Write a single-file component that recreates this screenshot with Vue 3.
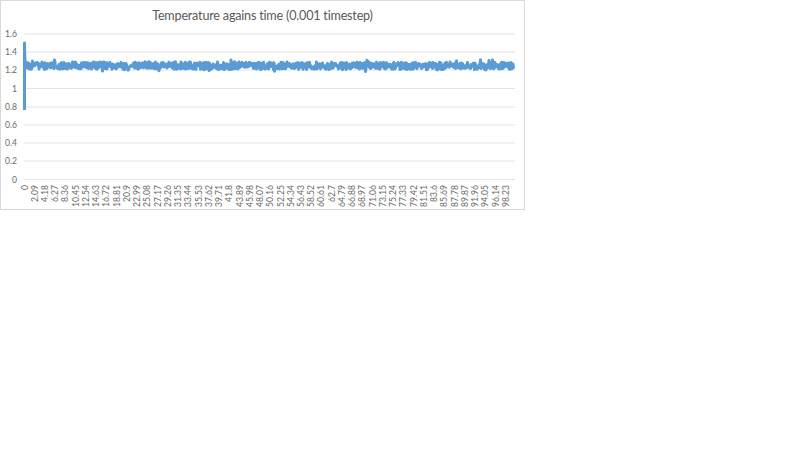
<script setup>
const yTicks = [
  { label: '1.6', y: 34 },
  { label: '1.4', y: 52 },
  { label: '1.2', y: 70 },
  { label: '1', y: 88.5 },
  { label: '0.8', y: 107 },
  { label: '0.6', y: 125 },
  { label: '0.4', y: 143 },
  { label: '0.2', y: 161 },
  { label: '0', y: 179.5 },
]

const xLabels = Array.from({ length: 48 }, (_, i) => {
  const value = String(Math.round(i * 209) / 100)
  return { value, x: 24.5 + i * 10.24 }
})

let seed = 12345
function rand() {
  seed = (seed * 16807) % 2147483647
  return (seed - 1) / 2147483646
}

const pts = ['24.5,110', '24.5,43', '25,66']
let drift = 0
for (let x = 25.5; x <= 514; x += 0.5) {
  drift = drift * 0.96 + (rand() - 0.5) * 0.3
  let y = 65.8 + drift + (rand() - 0.5) * 7.6
  const r = rand()
  if (r > 0.985) y -= 2.5
  else if (r < 0.015) y += 3
  pts.push(`${x},${y.toFixed(1)}`)
}
const linePoints = pts.join(' ')
</script>

<template>
  <div class="page">
    <div class="chart">
      <h1 class="title">Temperature agains time (0.001 timestep)</h1>
      <svg class="plot" width="523" height="209" viewBox="0 0 523 209">
        <g v-for="t in yTicks" :key="t.label">
          <line x1="24" x2="515" :y1="t.y" :y2="t.y" class="grid" />
          <text x="17" :y="t.y + 3" text-anchor="end" class="tick">{{ t.label }}</text>
        </g>
        <polyline :points="linePoints" class="series" />
        <text
          v-for="l in xLabels"
          :key="l.value"
          class="tick"
          text-anchor="end"
          :transform="`translate(${l.x + 3} 185) rotate(-90)`"
        >{{ l.value }}</text>
      </svg>
    </div>
  </div>
</template>

<style scoped>
.page {
  width: 800px;
  height: 450px;
  background: #fff;
  overflow: hidden;
}
.chart {
  position: relative;
  box-sizing: border-box;
  width: 525px;
  height: 210px;
  border: 1px solid #d9d9d9;
  background: #fff;
  font-family: Lato, "Open Sans", sans-serif;
}
.title {
  margin: 0;
  padding-top: 7px;
  font-size: 12.6px;
  letter-spacing: -0.2px;
  line-height: 16px;
  font-weight: 400;
  color: #595959;
  text-align: center;
  position: absolute;
  left: 0;
  right: 0;
  top: 0;
}
.plot {
  display: block;
  margin: -1px 0 0 -1px;
}
.grid {
  stroke: #e3e3e3;
  stroke-width: 1;
}
.tick {
  font-family: Lato, "Open Sans", sans-serif;
  font-size: 8.6px;
  fill: #6a6a6a;
}
.series {
  fill: none;
  stroke: #5b9bd5;
  stroke-width: 3;
  stroke-linejoin: round;
}
</style>
